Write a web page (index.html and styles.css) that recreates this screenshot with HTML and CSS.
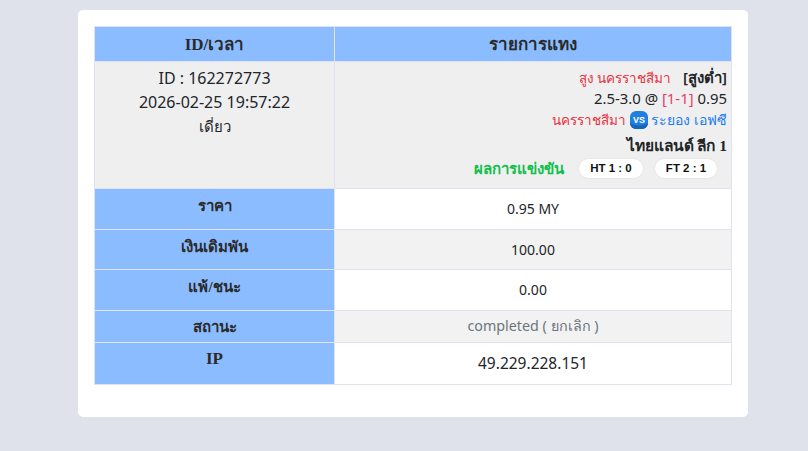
FILE: index.html
```html
<!DOCTYPE html>
<html lang="th">
<head>
<meta charset="utf-8">
<title>รายการแทง</title>
<link rel="stylesheet" href="styles.css">
</head>
<body>
<main class="card">
<table class="bets">
<colgroup><col class="col-a"><col class="col-b"></colgroup>
<thead>
<tr class="h-head"><th>ID/เวลา</th><th>รายการแทง</th></tr>
</thead>
<tbody>
<tr class="h-main">
<td class="info">ID : 162272773<br>2026-02-25 19:57:22<br><span class="thai">เดี่ยว</span></td>
<td class="detail">
<div class="line"><span class="red">สูง นครราชสีมา</span><span class="kind">[สูงต่ำ]</span></div>
<div class="line odds">2.5-3.0 @ <span class="pink">[1-1]</span> 0.95</div>
<div class="line teams"><span class="red">นครราชสีมา</span><svg class="vs" width="18" height="18" viewBox="0 0 18 18"><rect width="18" height="18" rx="6" fill="#1f7fe0"/><path d="M0 12q9 5 18 0v0a6 6 0 0 1-6 6H6a6 6 0 0 1-6-6z" fill="#1766b8"/><text x="9" y="12" text-anchor="middle" class="vs-text">VS</text></svg><span class="blue">ระยอง เอฟซี</span></div>
<div class="line league">ไทยแลนด์ ลีก 1</div>
<div class="result"><span class="green">ผลการแข่งขัน</span><span class="pill pill-ht">HT 1 : 0</span><span class="pill pill-ft">FT 2 : 1</span></div>
</td>
</tr>
<tr class="h-41"><th>ราคา</th><td>0.95 MY</td></tr>
<tr class="h-40 alt"><th>เงินเดิมพัน</th><td>100.00</td></tr>
<tr class="h-41"><th>แพ้/ชนะ</th><td>0.00</td></tr>
<tr class="h-32 alt"><th>สถานะ</th><td class="muted">completed ( ยกเลิก )</td></tr>
<tr class="h-42"><th class="ip">IP</th><td class="ip-val">49.229.228.151</td></tr>
</tbody>
</table>
</main>
</body>
</html>
```
FILE: styles.css
```css
* { box-sizing: border-box; }
html, body { margin: 0; }
body {
  height: 451px;
  overflow: hidden;
  background: #dfe2eb;
  padding: 10px 60px 0 78px;
  font-family: "Noto Sans", "DejaVu Sans", sans-serif;
  color: #212529;
}
.card {
  width: 670px;
  height: 407px;
  background: #fff;
  border-radius: 5px;
  padding: 16px;
}
.bets {
  width: 638px;
  border-collapse: collapse;
  table-layout: fixed;
  font-size: 14px;
}
.col-a { width: 240px; }
.bets th, .bets td {
  border: 1px solid #dfe2f0;
  text-align: center;
  vertical-align: middle;
  padding: 0 0 1px;
}
.bets th {
  background: #8bbcff;
  vertical-align: top;
  padding-top: 5px;
  font-family: "Liberation Serif", "Noto Sans", serif;
  font-size: 15px;
  color: #2a2a2a;
}
.h-head { height: 35px; }
.bets .h-head th { font-size: 17px; vertical-align: middle; padding-top: 0; }
.h-main { height: 127px; }
.h-main td { background: #efefef; vertical-align: top; }
.h-41 { height: 41px; }
.h-40 { height: 40px; }
.h-32 { height: 32px; }
.h-42 { height: 42px; }
.alt td { background: #f2f2f2; }
.bets .h-32 th { padding-top: 4px; }
.bets .info { padding-top: 4px; line-height: 24px; font-size: 16px; }
.thai { font-size: 15px; }
.bets .detail { text-align: right; padding: 4px 4px 0 0; line-height: 22px; }
.line { height: 22px; white-space: nowrap; }
.odds { font-size: 14.9px; margin-top: -1px; }
.kind { margin-left: 12px; font-size: 15px; font-weight: 600; }
.red { color: #e8313f; font-size: 13.5px; }
.pink { color: #ea3d6d; }
.blue { color: #1a7cf0; }
.green { color: #10c04c; font-weight: 700; font-size: 15px; margin-right: 4px; }
.teams { display: flex; justify-content: flex-end; align-items: center; gap: 4px; }
.vs { margin-right: -1px; }
.vs-text { font: 700 9px "Liberation Sans", sans-serif; fill: #fff; }
.league { margin-top: 4px; font-weight: 700; font-family: "Liberation Serif", serif; font-size: 15.5px; }
.result { display: flex; justify-content: flex-end; align-items: center; gap: 10px; padding-right: 9px; height: 22px; }
.pill {
  background: #fff;
  border: 1px solid #e6e6e6;
  border-radius: 11px;
  font: 700 11.5px "Liberation Sans", sans-serif;
  height: 21px;
  line-height: 19px;
  text-align: center;
  color: #111;
}
.pill-ht { width: 66px; }
.pill-ft { width: 64px; }
.muted { color: #6c757d; font-size: 14.3px; }
.bets .ip { font-size: 17px; padding-top: 6px; }
.ip-val { font-size: 15.5px; }
```
